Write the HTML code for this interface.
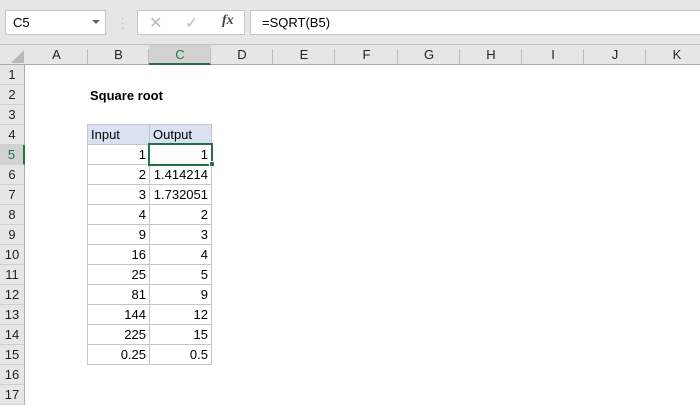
<!DOCTYPE html>
<html><head><style>
*{margin:0;padding:0;box-sizing:border-box}
body{width:700px;height:400px;overflow:hidden;background:#fff;font-family:"Liberation Sans",Arial,sans-serif;position:relative;font-size:13px;color:#000}
.a{position:absolute}
.ch{position:absolute;top:45px;height:20px;border-bottom:1px solid #ababab;text-align:center;line-height:19px;font-size:13px;color:#222}
.ch:after{content:"";position:absolute;right:0;top:4px;height:15px;border-right:1px solid #bcbcbc}
.rh{position:absolute;left:0;width:25px;height:20px;border-bottom:1px solid #d0d0d0;border-right:1px solid #ababab;text-align:center;line-height:20px;font-size:13px;color:#222;background:#e6e6e6}
.c{position:absolute;height:21px;border:1px solid #c6c6c6;line-height:19px;padding:0 3px;font-size:13px}
</style></head><body>
<div class="a" style="left:0;top:0;width:700px;height:45px;background:#e6e6e6;border-bottom:1px solid #c0c0c0"></div>
<div class="a" style="left:5px;top:10px;width:101px;height:25px;background:#fff;border:1px solid #c6c6c6;padding-left:7px;line-height:23px">C5</div>
<div class="a" style="left:92px;top:20px;width:0;height:0;border-left:4px solid transparent;border-right:4px solid transparent;border-top:4px solid #666"></div>
<div class="a" style="left:121px;top:16px;color:#aaa;font-size:10px;line-height:5px">·<br>·<br>·</div>
<div class="a" style="left:137px;top:10px;width:108px;height:25px;background:#fff;border:1px solid #c6c6c6"></div>
<div class="a" style="left:149px;top:13px;color:#bbb;font-size:16px">✕</div>
<div class="a" style="left:185px;top:13px;color:#bbb;font-size:16px">✓</div>
<div class="a" style="left:222px;top:13px;color:#444;font-family:'Liberation Serif',serif;font-style:italic;font-size:14px;font-weight:bold">fx</div>
<div class="a" style="left:250px;top:10px;width:450px;height:25px;background:#fff;border:1px solid #c6c6c6;border-right:none;padding-left:11px;line-height:23px">=SQRT(B5)</div>

<div class="a" style="left:0;top:45px;width:700px;height:20px;background:#e6e6e6;border-bottom:1px solid #ababab"></div>
<div class="a" style="left:11px;top:50px;width:0;height:0;border-left:13px solid transparent;border-bottom:13px solid #b8b8b8"></div>
<div class="ch" style="left:25px;width:63px">A</div>
<div class="ch" style="left:88px;width:61px">B</div>
<div class="ch" style="left:149px;width:62px;background:#d2d2d2;color:#217346;border-bottom:2px solid #217346">C</div>
<div class="ch" style="left:211px;width:62px">D</div>
<div class="ch" style="left:273px;width:62px">E</div>
<div class="ch" style="left:335px;width:63px">F</div>
<div class="ch" style="left:398px;width:62px">G</div>
<div class="ch" style="left:460px;width:62px">H</div>
<div class="ch" style="left:522px;width:62px">I</div>
<div class="ch" style="left:584px;width:62px">J</div>
<div class="ch" style="left:646px;width:62px">K</div>

<div class="rh" style="top:65px">1</div>
<div class="rh" style="top:85px">2</div>
<div class="rh" style="top:105px">3</div>
<div class="rh" style="top:125px">4</div>
<div class="rh" style="top:145px;background:#d2d2d2;color:#217346;border-right:2px solid #217346">5</div>
<div class="rh" style="top:165px">6</div>
<div class="rh" style="top:185px">7</div>
<div class="rh" style="top:205px">8</div>
<div class="rh" style="top:225px">9</div>
<div class="rh" style="top:245px">10</div>
<div class="rh" style="top:265px">11</div>
<div class="rh" style="top:285px">12</div>
<div class="rh" style="top:305px">13</div>
<div class="rh" style="top:325px">14</div>
<div class="rh" style="top:345px">15</div>
<div class="rh" style="top:365px">16</div>
<div class="rh" style="top:385px">17</div>

<div class="a" style="left:90px;top:88px;font-weight:bold;font-size:13px">Square root</div>

<div class="c" style="left:87px;top:124px;width:63px;background:#d9e1f2">Input</div>
<div class="c" style="left:149px;top:124px;width:63px;background:#d9e1f2">Output</div>

<div class="c" style="left:87px;top:144px;width:63px;text-align:right">1</div>
<div class="c" style="left:87px;top:164px;width:63px;text-align:right">2</div>
<div class="c" style="left:87px;top:184px;width:63px;text-align:right">3</div>
<div class="c" style="left:87px;top:204px;width:63px;text-align:right">4</div>
<div class="c" style="left:87px;top:224px;width:63px;text-align:right">9</div>
<div class="c" style="left:87px;top:244px;width:63px;text-align:right">16</div>
<div class="c" style="left:87px;top:264px;width:63px;text-align:right">25</div>
<div class="c" style="left:87px;top:284px;width:63px;text-align:right">81</div>
<div class="c" style="left:87px;top:304px;width:63px;text-align:right">144</div>
<div class="c" style="left:87px;top:324px;width:63px;text-align:right">225</div>
<div class="c" style="left:87px;top:344px;width:63px;text-align:right">0.25</div>

<div class="c" style="left:149px;top:164px;width:63px;text-align:right">1.414214</div>
<div class="c" style="left:149px;top:184px;width:63px;text-align:right">1.732051</div>
<div class="c" style="left:149px;top:204px;width:63px;text-align:right">2</div>
<div class="c" style="left:149px;top:224px;width:63px;text-align:right">3</div>
<div class="c" style="left:149px;top:244px;width:63px;text-align:right">4</div>
<div class="c" style="left:149px;top:264px;width:63px;text-align:right">5</div>
<div class="c" style="left:149px;top:284px;width:63px;text-align:right">9</div>
<div class="c" style="left:149px;top:304px;width:63px;text-align:right">12</div>
<div class="c" style="left:149px;top:324px;width:63px;text-align:right">15</div>
<div class="c" style="left:149px;top:344px;width:63px;text-align:right">0.5</div>

<div class="a" style="left:148px;top:143px;width:65px;height:23px;border:2px solid #217346;text-align:right;line-height:19px;padding-right:3px">1</div>
<div class="a" style="left:209px;top:161px;width:6px;height:6px;background:#217346;border:1px solid #fff"></div>
</body></html>
